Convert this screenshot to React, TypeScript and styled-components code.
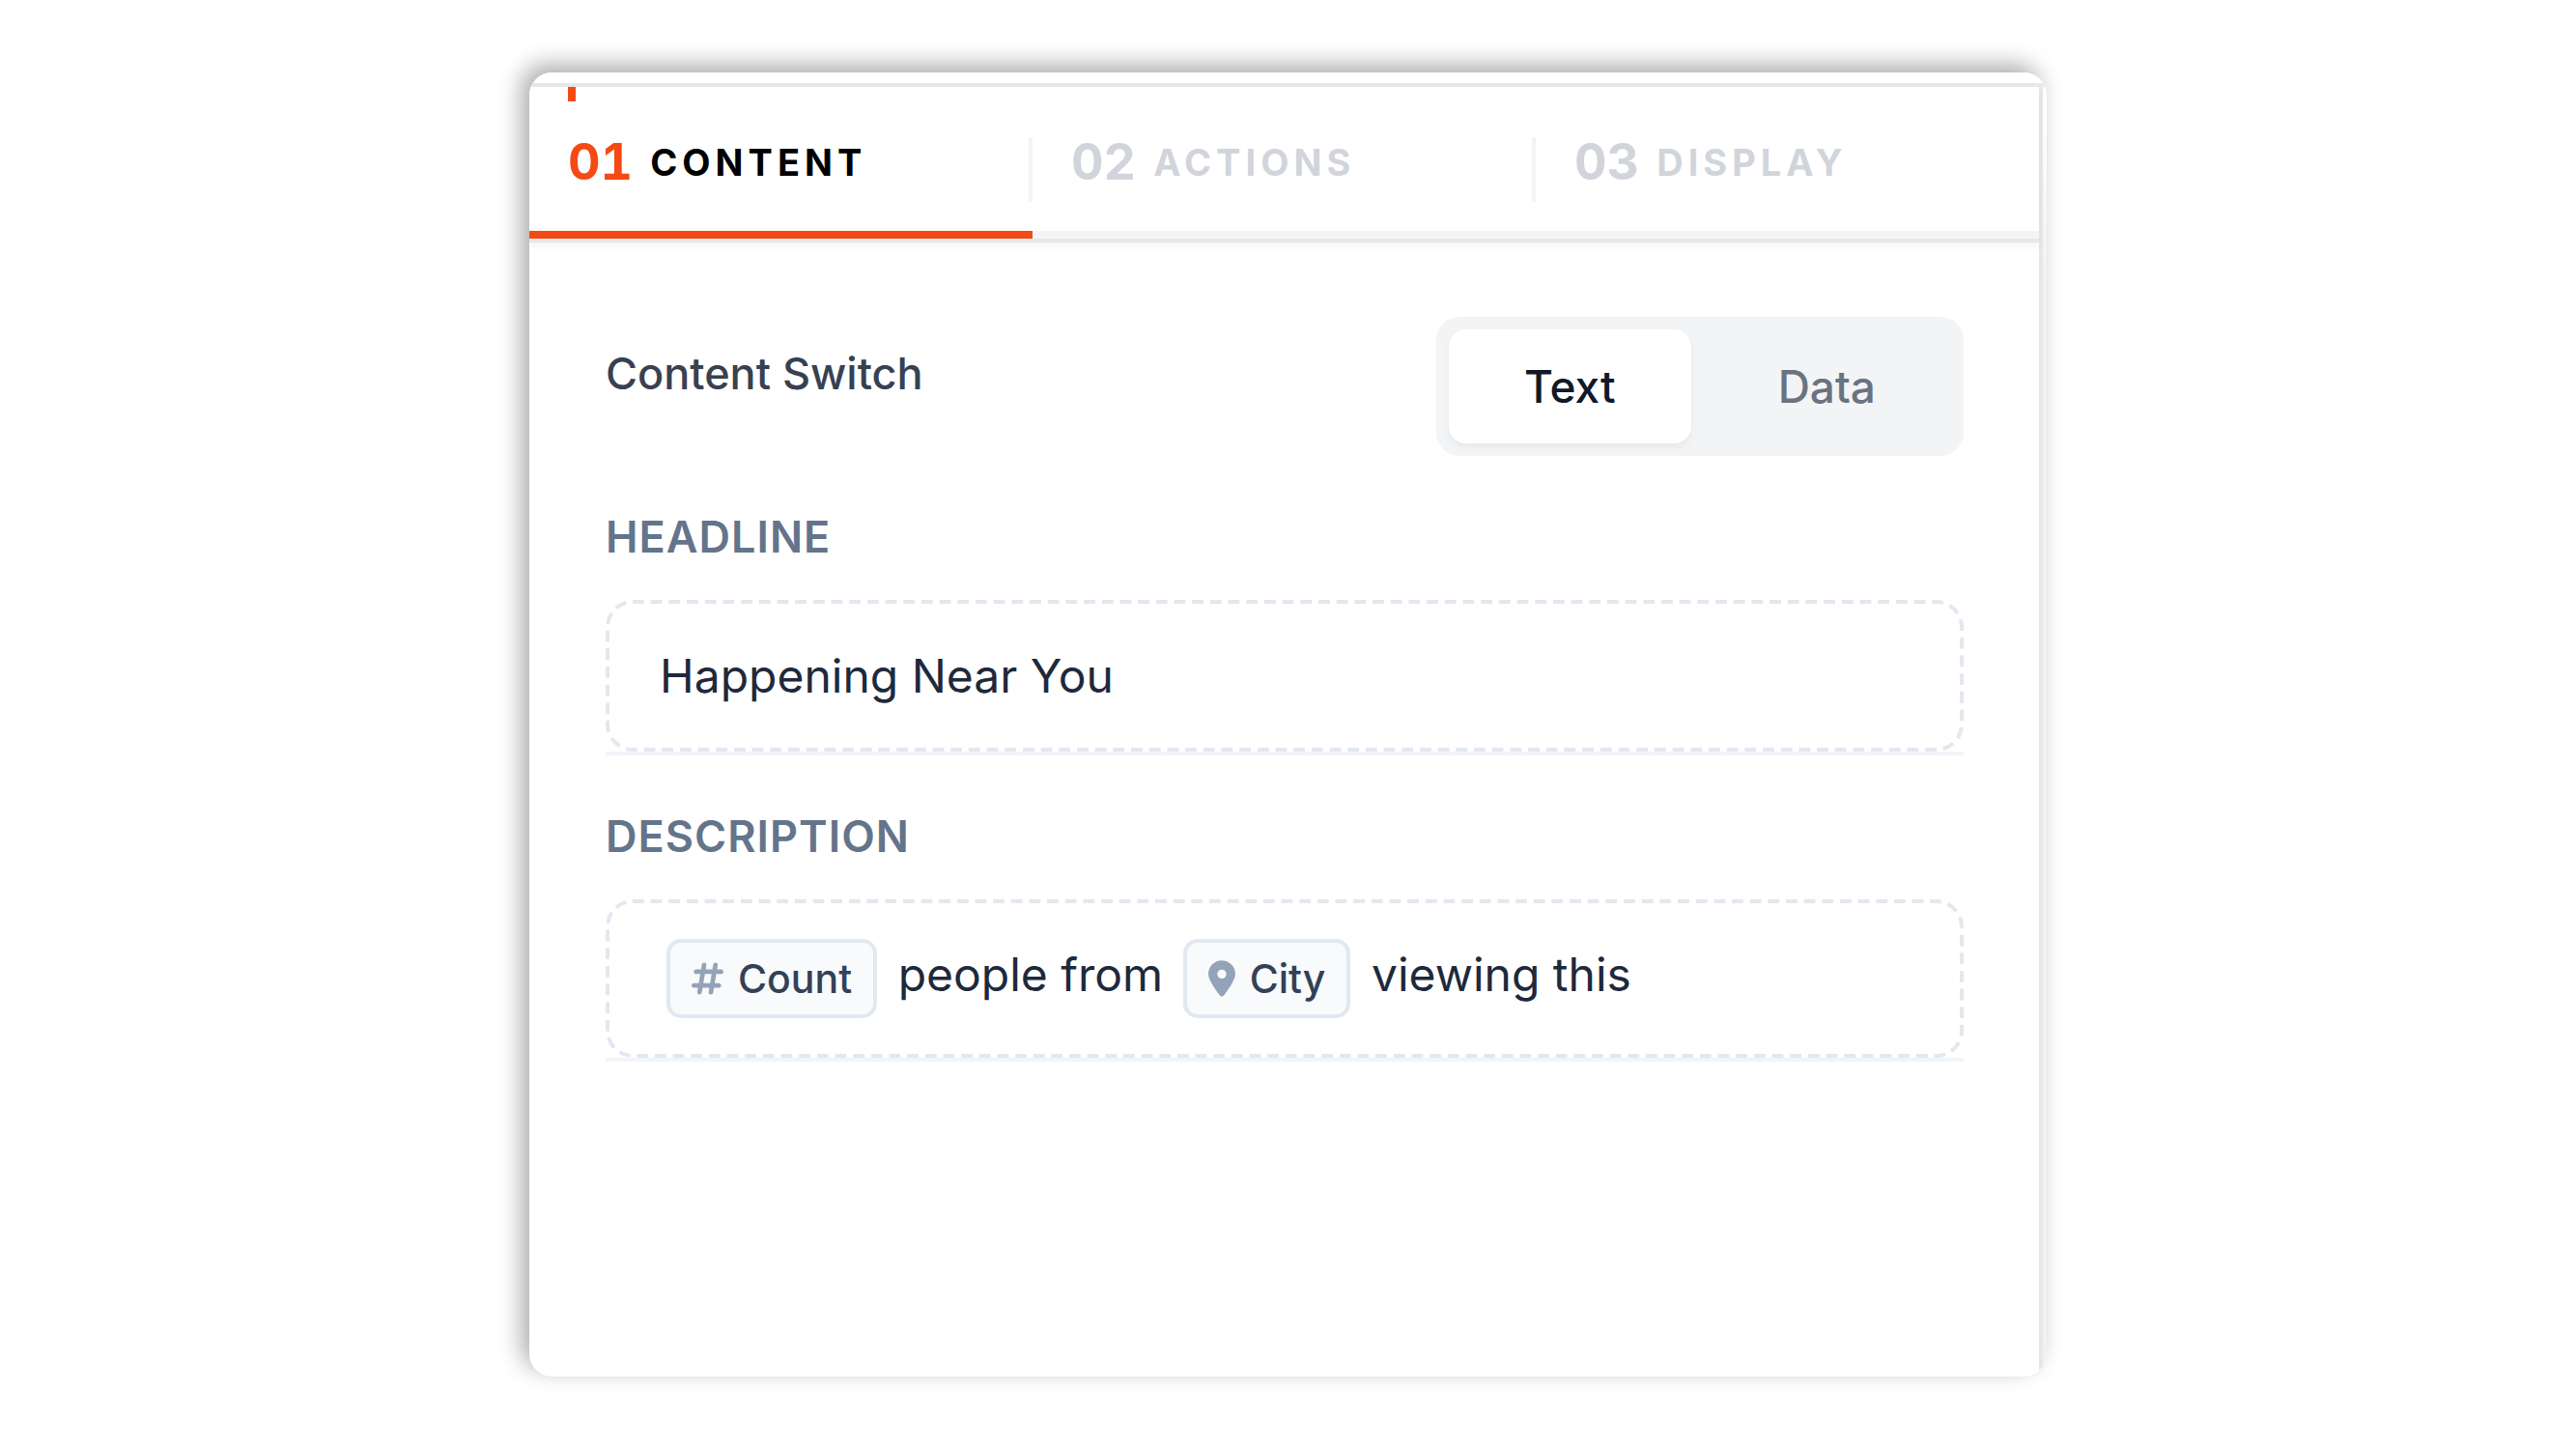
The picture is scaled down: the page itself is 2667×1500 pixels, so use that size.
import React, { useState } from "react";
import styled, { createGlobalStyle, css } from "styled-components";
import { FaHashtag, FaLocationDot } from "react-icons/fa6";

const GlobalStyle = createGlobalStyle`
  *, *::before, *::after { box-sizing: border-box; }
  body {
    margin: 0;
    background: #ffffff;
    font-family: Inter, "Liberation Sans", sans-serif;
  }
  button, input { font: inherit; }
`;

const Page = styled.main`
  display: flex;
  align-items: center;
  justify-content: center;
  min-height: 100vh;
`;

const Card = styled.section`
  display: flex;
  flex-direction: column;
  width: 100%;
  max-width: 1571px;
  min-height: 90vh;
  overflow: hidden;
  border-radius: 24px;
  background: linear-gradient(#ffffff 40px, #f1f1f1 220px);
  box-shadow: -8px -8px 24px rgba(0, 0, 0, 0.33);
`;

const TopEdge = styled.div`
  height: 15px;
  background: #ffffff;
  border-bottom: 4px solid #e5e7eb;
`;

const Panel = styled.div`
  flex: 1;
  margin-right: 4px;
  border-right: 4px solid #e5e7eb;
  background: #ffffff;
`;

const Tabs = styled.nav`
  display: grid;
  grid-template-columns: repeat(3, 1fr);
  border-bottom: 4px solid #e5e7eb;
  box-shadow: 0 4px 8px rgba(0, 0, 0, 0.05);
`;

const Tab = styled.button<{ $active: boolean }>`
  position: relative;
  padding: 52px 0 30px;
  border: 0;
  border-bottom: 8px solid ${(p) => (p.$active ? "#f54a14" : "#f3f4f6")};
  background: none;
  color: ${(p) => (p.$active ? "#000000" : "#d1d5db")};
  text-align: left;
  cursor: pointer;

  ${(p) =>
    p.$active &&
    css`
      &::before {
        content: "";
        position: absolute;
        top: 0;
        left: 40px;
        width: 8px;
        height: 15px;
        background: #f54a14;
      }
    `}
`;

const TabInner = styled.span`
  display: flex;
  align-items: flex-start;
  gap: 18px;
  height: 67px;
  padding-left: 40px;
  border-right: 4px solid #f3f4f6;
  line-height: 52px;

  ${Tab}:last-child & {
    border-right-color: transparent;
  }
`;

const TabNumber = styled.span<{ $active: boolean }>`
  font-size: 52px;
  font-weight: 700;
  font-variant-numeric: tabular-nums;
  color: ${(p) => (p.$active ? "#f54a14" : "#d1d5db")};
`;

const TabName = styled.span`
  font-size: 38px;
  font-weight: 700;
  letter-spacing: 5px;
`;

const Form = styled.div`
  padding: 77px 78px 77px 79px;
`;

const SwitchRow = styled.div`
  display: flex;
  align-items: center;
  justify-content: space-between;
`;

const SwitchLabel = styled.span`
  margin-bottom: 26px;
  font-size: 45px;
  font-weight: 500;
  line-height: 64px;
  color: #374151;
`;

const Toggle = styled.div`
  display: flex;
  gap: 12px;
  padding: 13px;
  border-radius: 24px;
  background: #f3f4f6;
`;

const ToggleButton = styled.button<{ $active: boolean }>`
  padding: 27px 78px;
  border: 0;
  border-radius: 18px;
  background: ${(p) => (p.$active ? "#ffffff" : "transparent")};
  box-shadow: ${(p) => (p.$active ? "0 4px 8px rgba(0, 0, 0, 0.05)" : "none")};
  color: ${(p) => (p.$active ? "#111827" : "#6b7280")};
  font-size: 46px;
  font-weight: 500;
  line-height: 64px;
  cursor: pointer;
`;

const Field = styled.div`
  display: flex;
  flex-direction: column;
  gap: 33px;
  margin-top: 52px;
`;

const FieldLabel = styled.label`
  font-size: 45px;
  font-weight: 600;
  line-height: 64px;
  letter-spacing: 1px;
  color: #64748b;
`;

const Box = styled.div`
  position: relative;
  border-bottom: 4px solid #f1f5f9;
`;

const Outline = styled.svg`
  position: absolute;
  inset: 0;
  width: 100%;
  height: 100%;
  overflow: visible;
  pointer-events: none;

  rect {
    x: 2px;
    y: 2px;
    width: calc(100% - 4px);
    height: calc(100% - 4px);
    fill: none;
    stroke: #e2e8f0;
    stroke-width: 4px;
  }
`;

const textStyle = css`
  font-size: 48px;
  font-weight: 400;
  color: #1e293b;
`;

const TextInput = styled.input`
  ${textStyle}
  display: block;
  width: 100%;
  height: 157px;
  padding: 0 56px;
  border: 0;
  outline: 0;
  background: transparent;
`;

const RichInput = styled.div`
  ${textStyle}
  padding: 41px 56px;
  outline: 0;
  line-height: 56px;
`;

const Chip = styled.span<{ $iconWidth: number }>`
  display: inline-flex;
  align-items: center;
  gap: 15px;
  margin: 0 8px 0 7px;
  padding: 12px 22px;
  border: 4px solid #e2e8f0;
  border-radius: 15px;
  background: #f8fafc;
  color: #334155;
  font-size: 41px;
  font-weight: 500;
  line-height: 50px;
  vertical-align: middle;

  svg {
    width: ${(p) => p.$iconWidth}px;
    height: 38px;
    color: #94a3b8;
  }
`;

const tabs = ["Content", "Actions", "Display"];
const modes = ["Text", "Data"];

/* The path length is a whole number of 12 + 7 dash periods, so the dashes close evenly. */
function DashedOutline({ dashes }: { dashes: number }) {
  return (
    <Outline aria-hidden="true">
      <rect rx="26" ry="26" pathLength={dashes * 19} strokeDasharray="12 7" />
    </Outline>
  );
}

export default function App() {
  const [tab, setTab] = useState("Content");
  const [mode, setMode] = useState("Text");
  const [headline, setHeadline] = useState("Happening Near You");

  return (
    <>
      <GlobalStyle />
      <Page>
        <Card>
          <TopEdge />
          <Panel>
            <Tabs>
              {tabs.map((name, i) => (
                <Tab key={name} type="button" $active={tab === name} onClick={() => setTab(name)}>
                  <TabInner>
                    <TabNumber $active={tab === name}>{`0${i + 1}`}</TabNumber>
                    <TabName>{name.toUpperCase()}</TabName>
                  </TabInner>
                </Tab>
              ))}
            </Tabs>
            <Form>
              <SwitchRow>
                <SwitchLabel id="switch-label">Content Switch</SwitchLabel>
                <Toggle role="group" aria-labelledby="switch-label">
                  {modes.map((name) => (
                    <ToggleButton
                      key={name}
                      type="button"
                      aria-pressed={mode === name}
                      $active={mode === name}
                      onClick={() => setMode(name)}
                    >
                      {name}
                    </ToggleButton>
                  ))}
                </Toggle>
              </SwitchRow>
              <Field>
                <FieldLabel htmlFor="headline">HEADLINE</FieldLabel>
                <Box>
                  <DashedOutline dashes={164} />
                  <TextInput
                    id="headline"
                    value={headline}
                    onChange={(e) => setHeadline(e.target.value)}
                  />
                </Box>
              </Field>
              <Field>
                <FieldLabel as="span" id="description-label">
                  DESCRIPTION
                </FieldLabel>
                <Box>
                  <DashedOutline dashes={165} />
                  <RichInput
                    role="textbox"
                    aria-labelledby="description-label"
                    contentEditable
                    suppressContentEditableWarning
                    spellCheck={false}
                  >
                    <Chip $iconWidth={33} contentEditable={false}>
                      <FaHashtag />
                      Count
                    </Chip>
                    {" people from "}
                    <Chip $iconWidth={28} contentEditable={false}>
                      <FaLocationDot />
                      City
                    </Chip>
                    {" viewing this"}
                  </RichInput>
                </Box>
              </Field>
            </Form>
          </Panel>
        </Card>
      </Page>
    </>
  );
}
